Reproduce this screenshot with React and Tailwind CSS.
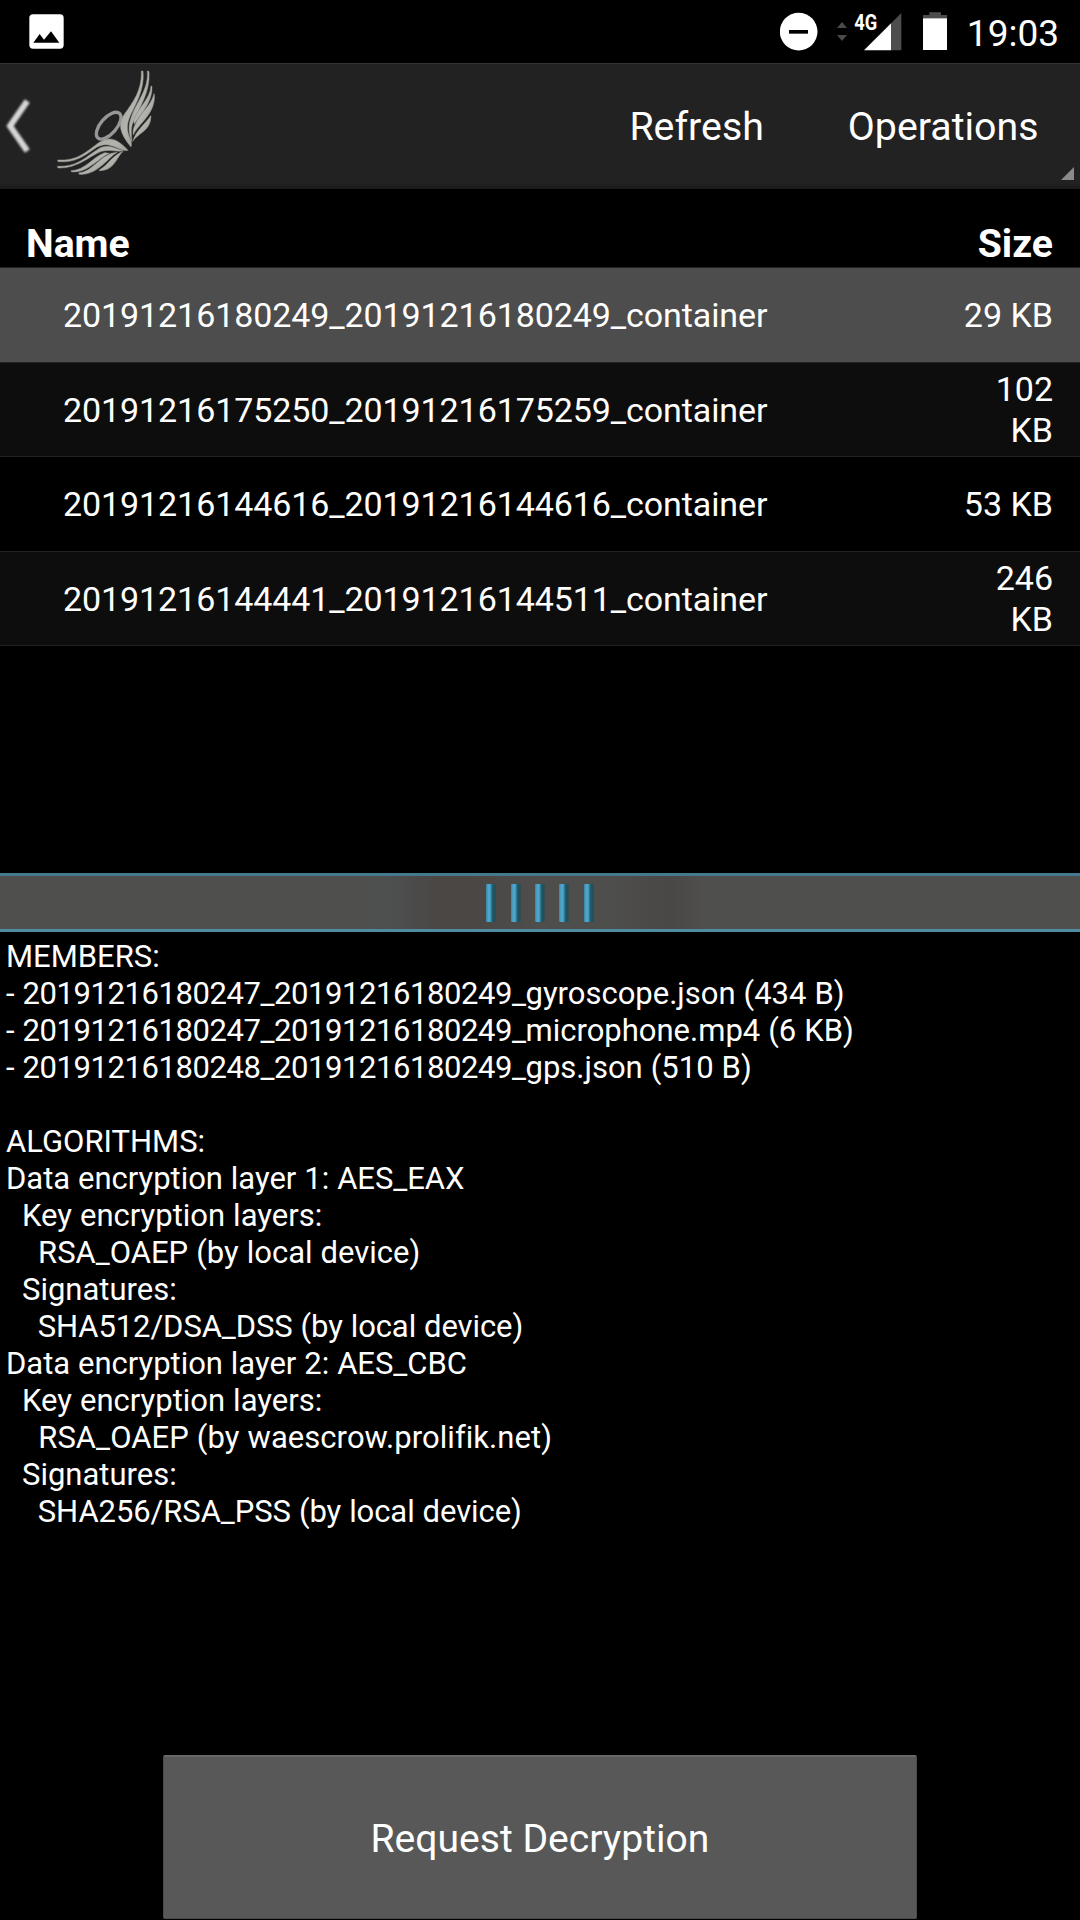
import React from "react";

const rows = [
  { name: "20191216180249_20191216180249_container", size: "29 KB", bg: "bg-[#4d4d4d]" },
  { name: "20191216175250_20191216175259_container", size: "102 KB", bg: "bg-[#0d0d0d]" },
  { name: "20191216144616_20191216144616_container", size: "53 KB", bg: "bg-black" },
  { name: "20191216144441_20191216144511_container", size: "246 KB", bg: "bg-[#0d0d0d]" },
];

const members = [
  ["20191216180247_20191216180249_", "gyroscope.json (434 B)"],
  ["20191216180247_20191216180249_", "microphone.mp4 (6 KB)"],
  ["20191216180248_20191216180249_", "gps.json (510 B)"],
];

const algorithms = [
  ["ALGORITHMS:", ""],
  ["Data encryption layer 1: AES_EAX", "tracking-[-0.03px]"],
  ["  Key encryption layers:", ""],
  ["    RSA_OAEP (by local device)", ""],
  ["  Signatures:", ""],
  ["    SHA512/DSA_DSS (by local device)", "tracking-[-0.09px]"],
  ["Data encryption layer 2: AES_CBC", "tracking-[-0.03px]"],
  ["  Key encryption layers:", ""],
  ["    RSA_OAEP (by waescrow.prolifik.net)", "tracking-[0.05px]"],
  ["  Signatures:", ""],
  ["    SHA256/RSA_PSS (by local device)", "tracking-[-0.07px]"],
];

function StatusBar() {
  return (
    <div className="flex h-[63px] items-start justify-between bg-black pl-[29px] pr-[21px]">
      <svg className="mt-[14px] h-[35px] w-[35px]" viewBox="87 42 105 105">
        <rect x="88" y="43" width="103" height="103" rx="11" fill="#fff" />
        <path d="M100 128 L119 102 L132 119 L153 94 L178 128 Z" fill="#000" />
      </svg>
      <div className="flex items-start">
        <svg className="h-[63px] w-[167px]" viewBox="60 0 501 189">
          <circle cx="116" cy="95" r="56.5" fill="#fff" />
          <rect x="87" y="90" width="57" height="11" fill="#000" />
          <path d="M231 84 L246 66 L261 84 Z M231 105 L261 105 L246 123 Z" fill="#4a4a4a" />
          <text x="0" y="0" transform="translate(283 89) scale(0.82 1)" fontFamily="Roboto" fontWeight="700" fontSize="67" fill="#fff">4G</text>
          <path d="M312 151 L394 69 V151 Z" fill="#fff" />
          <path d="M394 69 L424 39 V151 H394 Z" fill="#4d4d4d" />
          <path d="M508 37 H543 V45 H561 V56 H489 V45 H508 Z" fill="#4d4d4d" />
          <rect x="489" y="55" width="72" height="95" fill="#fff" />
        </svg>
        <div className="ml-[19.5px] mt-[12px] text-[37px] leading-[44px]">19:03</div>
      </div>
    </div>
  );
}

function Logo() {
  return (
    <svg className="ml-[17px] h-[120px] w-[120px]" viewBox="0 0 360 360">
      <defs>
        <linearGradient id="silver" x1="0" y1="0" x2="1" y2="1">
          <stop offset="0" stopColor="#989896" />
          <stop offset="0.5" stopColor="#b4b4ae" />
          <stop offset="1" stopColor="#90908d" />
        </linearGradient>
      </defs>
      <g fill="url(#silver)" stroke="#9a9a97" strokeWidth="1.5" strokeLinejoin="round">
        <ellipse cx="176" cy="194" rx="49" ry="24" transform="rotate(-49 176 194)" fill="none" stroke="#979797" strokeWidth="10" />
        <path d="M274 30 C276 88 250 122 223 160 C204 188 207 214 243 258 C247 248 243 237 237 224 C229 200 232 184 241 164 C256 132 285 85 279 30 Z" />
        <path d="M292 30 C297 85 258 125 244 168 C232 196 238 220 245 242 C246 222 240 204 250 182 C264 145 302 98 297 31 Z" />
        <path d="M303 75 C301 113 264 140 251 178 L253 189 C267 166 309 125 306 76 Z" />
        <path d="M312 98 C304 134 270 156 256 189 C248 205 249 213 250 222 C264 188 318 160 313 99 Z" />
        <path d="M302 164 C287 188 259 206 248 241 C267 214 301 211 303 166 Z" />
        <path d="M23 297 C84 301 112 269 146 245 C174 227 198 228 234 268 C220 272 207 262 190 256 C172 249 158 249 140 259 C108 281 78 307 24 302 Z" />
        <path d="M22 316 C84 318 108 286 142 266 C160 252 181 254 201 263 L219 269 C199 274 180 264 155 271 C122 283 82 324 24 321 Z" />
        <path d="M63 329 C105 328 128 288 164 275 L178 277 C150 288 112 339 64 332 Z" />
        <path d="M86 336 C126 332 146 291 184 277 L202 274 C177 286 144 344 88 340 Z" />
        <path d="M148 327 C173 314 183 286 219 271 C198 292 192 330 148 329 Z" />
      </g>
    </svg>
  );
}

function ActionBar() {
  return (
    <div className="relative flex h-[126px] items-center border-t border-[#333] bg-[#222]">
      <svg className="-mt-[2px] ml-[3px] h-[70px] w-[30px] blur-[1px]" viewBox="10 273 90 210">
        <path d="M83 303 L31 378 L83 453" fill="none" stroke="#d6d6d6" strokeWidth="18" />
      </svg>
      <div className="-mt-[12px]">
        <Logo />
      </div>
      <div className="ml-auto flex gap-[84px] pr-[41.5px] text-[39.3px] leading-[46px]">
        <div>Refresh</div>
        <div>Operations</div>
      </div>
      <svg className="absolute bottom-[9px] right-[6px] h-[13px] w-[13px]" viewBox="0 0 13 13">
        <path d="M0 13 L13 0 V13 Z" fill="#8a8a8a" />
      </svg>
      <div className="absolute inset-x-0 bottom-0 h-[6px] bg-gradient-to-b from-[#222] to-[#181818]" />
    </div>
  );
}

function FileTable() {
  return (
    <div className="h-[684px]">
      <div className="flex h-[78px] items-end justify-between pl-[26px] pr-[27px] text-[39.2px] font-bold leading-[46px]">
        <div>Name</div>
        <div>Size</div>
      </div>
      {rows.map((r) => (
        <div key={r.name} className={`flex h-[94.5px] items-center justify-between border-t border-[#222] pl-[63px] pr-[27px] pt-[2px] text-[34px] leading-[41px] ${r.bg}`}>
          <div className="tracking-[-0.09px]">{r.name}</div>
          <div className="w-[90px] text-right">{r.size}</div>
        </div>
      ))}
      <div className="h-px bg-[#222]" />
    </div>
  );
}

function Splitter() {
  return (
    <div className="flex h-[59px] items-center justify-center gap-[14.3px] border-b-[3px] border-t-[3px] border-b-[#4f8ba1] border-t-[#457a8e] bg-[linear-gradient(90deg,#4f4f4d_0%,#4f4f4d_33%,#4d5050_36%,#4b4745_40%,#4b4745_44%,#4e4e4c_50%,#4e4e4c_57%,#4a4745_62%,#4f4f4d_65%,#4f4f4d_100%)]">
      {[0, 1, 2, 3, 4].map((i) => (
        <div key={i} className="h-[38px] w-[10px] rounded-[1px] bg-[linear-gradient(90deg,#3a86a5_0%,#55acd4_30%,#3e93b3_48%,#1f5f70_62%,#22505a_85%,#40494b_100%)]" />
      ))}
    </div>
  );
}

function Details() {
  return (
    <div className="mt-[6px] whitespace-pre pl-[6px] text-[31px] leading-[37px] [word-spacing:0.32px]">
      <div>MEMBERS:</div>
      {members.map(([stamp, rest]) => (
        <div key={rest}>
          - <span className="tracking-[-0.43px]">{stamp}</span>
          {rest}
        </div>
      ))}
      <div className="h-[37px]" />
      {algorithms.map(([line, tracking], i) => (
        <div key={i} className={tracking}>{line}</div>
      ))}
    </div>
  );
}

export default function App() {
  return (
    <div className="flex h-[1920px] w-[1080px] flex-col overflow-hidden bg-black font-['Roboto',sans-serif] text-white [font-variant-ligatures:none]">
      <StatusBar />
      <ActionBar />
      <FileTable />
      <Splitter />
      <Details />
      <button className="mx-auto mb-[1px] mt-auto h-[164px] w-[754px] rounded-[2px] border border-t-2 border-[#4c4c4c] border-t-[#686868] bg-[#585858] pt-[2px] text-[39.1px] leading-[46px]">
        Request Decryption
      </button>
    </div>
  );
}
